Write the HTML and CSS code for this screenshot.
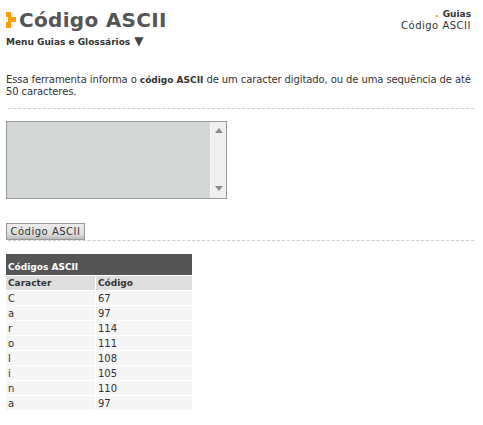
FILE: index.html
```html
<!DOCTYPE html>
<html lang="pt-BR">
<head>
  <meta charset="UTF-8">
  <title>Código ASCII</title>
  <link rel="stylesheet" href="styles.css">
</head>
<body>
  <div class="top">
    <div class="top-left">
      <h1 class="title">
        <svg class="bullet" width="10" height="16" viewBox="0 0 10 16">
          <rect x="0" y="0" width="5" height="5" fill="#ff9c00"/>
          <rect x="5" y="5" width="5" height="5" fill="#ff9c00"/>
          <rect x="0" y="10" width="5" height="6" fill="#ff9c00"/>
          <rect x="2" y="5" width="3" height="5" fill="#ff9c00"/>
        </svg>Código ASCII
      </h1>
      <div class="menu">Menu Guias e Glossários <span class="arrow">▼</span></div>
    </div>
    <div class="crumb">
      <div><span class="dot">.</span> <b>Guias</b></div>
      <div>Código ASCII</div>
    </div>
  </div>

  <p class="intro">Essa ferramenta informa o <b>código ASCII</b> de um caracter digitado, ou de uma sequência de até 50 caracteres.</p>
  <div class="rule"></div>

  <div class="area">
    <div class="scroll">
      <svg width="8" height="5" viewBox="0 0 8 5"><path d="M4 0L8 5H0Z" fill="#8a8a8a"/></svg>
      <svg width="8" height="5" viewBox="0 0 8 5"><path d="M0 0H8L4 5Z" fill="#8a8a8a"/></svg>
    </div>
  </div>

  <button class="btn">Código ASCII</button>
  <div class="rule rule-btn"></div>

  <table class="codes">
    <thead>
      <tr><th colspan="2" class="head">Códigos ASCII</th></tr>
      <tr><th>Caracter</th><th>Código</th></tr>
    </thead>
    <tbody>
      <tr><td>C</td><td>67</td></tr>
      <tr><td>a</td><td>97</td></tr>
      <tr><td>r</td><td>114</td></tr>
      <tr><td>o</td><td>111</td></tr>
      <tr><td>l</td><td>108</td></tr>
      <tr><td>i</td><td>105</td></tr>
      <tr><td>n</td><td>110</td></tr>
      <tr><td>a</td><td>97</td></tr>
    </tbody>
  </table>
</body>
</html>
```

FILE: styles.css
```css
body {
  font-family: 'DejaVu Sans', Verdana, sans-serif;
  font-size: 10px;
  color: #333;
  margin: 0;
  padding: 0 12px 0 6px;
  background: white;
}

.top {
  display: flex;
  justify-content: space-between;
  padding-top: 5px;
}

.title {
  font-size: 20px;
  letter-spacing: 0.3px;
  line-height: 30px;
  color: #555;
  margin: 0;
  display: flex;
  align-items: center;
}

.bullet {
  margin-right: 3px;
}

.menu {
  font-size: 9px;
  font-weight: bold;
  line-height: 12px;
}

.arrow {
  font-size: 12px;
  color: #444;
  margin-left: 1px;
}

.crumb {
  text-align: right;
  letter-spacing: 0.5px;
  line-height: 12px;
  padding-top: 3px;
}

.crumb b {
  font-size: 9px;
  letter-spacing: 0;
}

.dot {
  color: #ff9c00;
  font-weight: bold;
}

.intro {
  line-height: 12px;
  letter-spacing: -0.1px;
  margin: 26px 0 0;
}

.intro b {
  font-size: 9px;
  letter-spacing: 0;
}

.rule {
  border-top: 1px dashed #ccc;
  margin: 10px -3px 0 2px;
}

.area {
  width: 219px;
  height: 76px;
  margin-top: 12px;
  border: 1px solid #999;
  background: #d3d7d6;
  display: flex;
  justify-content: flex-end;
}

.scroll {
  width: 16px;
  background: #efefef;
  border-left: 1px solid #f8f8f8;
  display: flex;
  flex-direction: column;
  justify-content: space-between;
  align-items: center;
  padding: 6px 0 7px;
  box-sizing: border-box;
}

.btn {
  display: block;
  font-family: inherit;
  font-size: 10px;
  letter-spacing: 0.5px;
  color: #333;
  width: 79px;
  height: 17px;
  padding: 0;
  margin-top: 24px;
  border: 1px solid #999;
  background: linear-gradient(#ececec, #ddd 70%, #bbb);
}

.rule-btn {
  margin-top: 0;
}

.codes {
  width: 186px;
  margin-top: 13px;
  border-collapse: separate;
  border-spacing: 0;
  font-size: 9px;
}

.codes th, .codes td {
  text-align: left;
  padding: 0 2px;
  height: 14px;
  line-height: 14px;
  border-bottom: 1px solid white;
}

.codes th {
  background: #ddd;
}

.codes .head {
  background: #555;
  color: white;
  height: 16px;
  padding-top: 5px;
}

.codes td {
  background: #f5f5f5;
  font-size: 10px;
  height: 13px;
  line-height: 13px;
  padding-top: 1px;
}

.codes th + th, .codes td + td {
  border-left: 1px solid white;
  width: 92px;
}
```
